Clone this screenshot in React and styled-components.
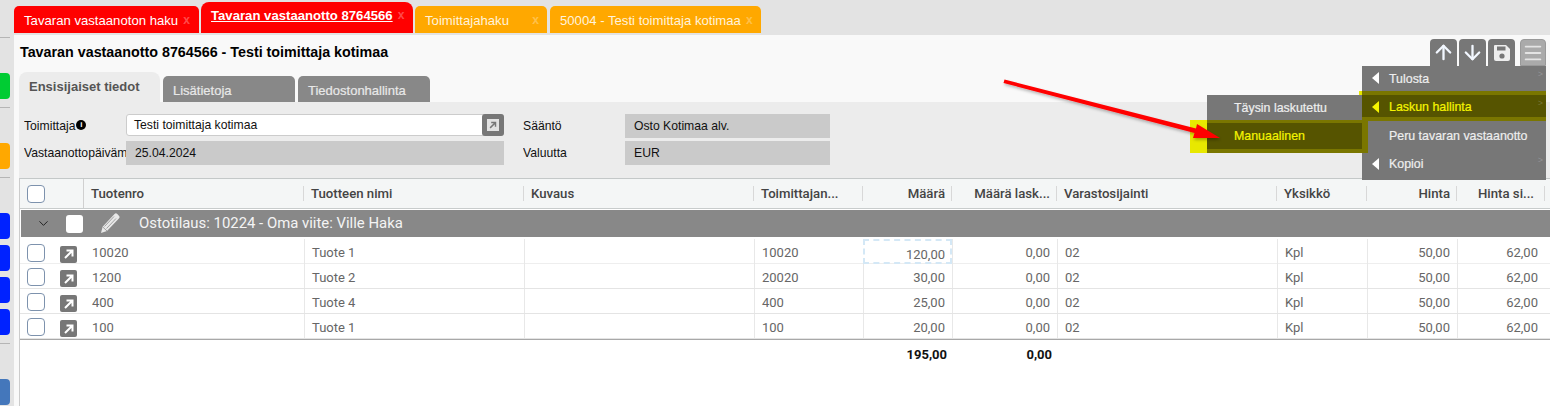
import React from 'react'
import styled, { createGlobalStyle } from 'styled-components'
import { ArrowUp, ArrowDown, Menu, ChevronDown } from 'lucide-react'

const columns = '64px 220px 220px 230px 109px 89px 105px 220px 90px 90px 88px 1fr'

const rows = [
  { no: '10020', name: 'Tuote 1', supplier: '10020', qty: '120,00', focused: true, thick: true },
  { no: '1200', name: 'Tuote 2', supplier: '20020', qty: '30,00' },
  { no: '400', name: 'Tuote 4', supplier: '400', qty: '25,00' },
  { no: '100', name: 'Tuote 1', supplier: '100', qty: '20,00' },
]

const GoIcon = ({ color = '#fff' }) => (
  <svg width="12" height="12" viewBox="0 0 12 12" fill="none" stroke={color} strokeWidth="2">
    <path d="M2 10 L9.5 2.5 M3.5 2.5 H9.5 V8.5" />
  </svg>
)

const App = () => {
  return (
    <Page>
      <GlobalStyle />
      <SideRail>
        <RailRule $top={37} />
        <RailButton $color="#00cc33" $top={35} />
        <RailRule $top={8} />
        <RailButton $color="#ffa800" $top={35} />
        <RailRule $top={8} />
        <RailButton $color="#0022ff" $top={35} />
        <RailButton $color="#0022ff" $top={6} />
        <RailButton $color="#0022ff" $top={6} />
        <RailButton $color="#0022ff" $top={6} />
        <RailRule $top={8} />
        <RailButton $color="#4477bb" $top={35} />
      </SideRail>
      <Content>
        <TabStrip>
          <PageTab $color="#ff0000" $width={185}>
            Tavaran vastaanoton haku<TabClose>x</TabClose>
          </PageTab>
          <PageTab $color="#ff0000" $width={212} $active>
            <u>Tavaran vastaanotto 8764566</u><TabClose>x</TabClose>
          </PageTab>
          <PageTab $color="#ffa800" $width={132}>
            Toimittajahaku<TabClose $push>x</TabClose>
          </PageTab>
          <PageTab $color="#ffa800" $width={211} $shift={1}>
            50004 - Testi toimittaja kotimaa<TabClose>x</TabClose>
          </PageTab>
        </TabStrip>
        <Sheet>
          <TitleRow>
            <Title>Tavaran vastaanotto 8764566 - Testi toimittaja kotimaa</Title>
            <Toolbar>
              <ToolButton><ArrowUp size={23} strokeWidth={2.4} /></ToolButton>
              <ToolButton><ArrowDown size={23} strokeWidth={2.4} /></ToolButton>
              <ToolButton>
                <svg width="20" height="20" viewBox="0 0 20 20">
                  <path d="M3 2 H14 L18 6 V16 a2 2 0 0 1 -2 2 H4 a2 2 0 0 1 -2 -2 V3 a1 1 0 0 1 1 -1 Z" fill="#eee" />
                  <rect x="5" y="3.5" width="8.5" height="4" fill="#777" />
                  <circle cx="10" cy="13" r="2.6" fill="#777" />
                </svg>
              </ToolButton>
              <ToolButton $light><Menu size={22} strokeWidth={2} /></ToolButton>
            </Toolbar>
          </TitleRow>
          <SectionTabs>
            <SectionTab $active>Ensisijaiset tiedot</SectionTab>
            <SectionTab>Lisätietoja</SectionTab>
            <SectionTab>Tiedostonhallinta</SectionTab>
          </SectionTabs>
          <FormPanel>
            <FormColumn>
              <FormRow>
                <FormLabel>Toimittaja<InfoDot>i</InfoDot></FormLabel>
                <LookupInput>
                  <span>Testi toimittaja kotimaa</span>
                  <LookupButton><LookupGlyph><GoIcon color="#777" /></LookupGlyph></LookupButton>
                </LookupInput>
              </FormRow>
              <FormRow>
                <FormLabel>Vastaanottopäivämäärä</FormLabel>
                <ReadOnlyField>25.04.2024</ReadOnlyField>
              </FormRow>
            </FormColumn>
            <FormColumn $second>
              <FormRow>
                <FormLabel>Sääntö</FormLabel>
                <ReadOnlyField $narrow>Osto Kotimaa alv.</ReadOnlyField>
              </FormRow>
              <FormRow>
                <FormLabel>Valuutta</FormLabel>
                <ReadOnlyField $narrow>EUR</ReadOnlyField>
              </FormRow>
            </FormColumn>
          </FormPanel>
          <Table>
            <HeaderRow>
              <HeaderCheckCell><CheckBox /></HeaderCheckCell>
              <HeaderCell>Tuotenro</HeaderCell>
              <HeaderCell>Tuotteen nimi</HeaderCell>
              <HeaderCell>Kuvaus</HeaderCell>
              <HeaderCell>Toimittajan...</HeaderCell>
              <HeaderCell $right>Määrä</HeaderCell>
              <HeaderCell $right>Määrä lask...</HeaderCell>
              <HeaderCell>Varastosijainti</HeaderCell>
              <HeaderCell>Yksikkö</HeaderCell>
              <HeaderCell $right>Hinta</HeaderCell>
              <HeaderCell $right $pad={10}>Hinta si...</HeaderCell>
              <span />
            </HeaderRow>
            <GroupRow>
              <ChevronDown size={15} color="#222" strokeWidth={1.6} />
              <GroupCheck />
              <GroupPencil width="20" height="21" viewBox="0 0 20 21">
                <path d="M14.5 1 a2 2 0 0 1 2.8 0 l1.6 1.7 a2 2 0 0 1 0 2.8 L7 18 L1 20 L2.6 13.8 Z" fill="#e8e8e8" />
                <path d="M4.5 13.5 L14 3.5 M6.5 15.5 L16 5.5" stroke="#999" strokeWidth="0.9" fill="none" />
                <path d="M2.6 13.8 L7 18" stroke="#999" strokeWidth="0.9" fill="none" />
              </GroupPencil>
              <GroupText>Ostotilaus: 10224 - Oma viite: Ville Haka</GroupText>
            </GroupRow>
            {rows.map(row => (
              <DataRow key={row.no} $thick={row.thick}>
                <CheckCell>
                  <CheckBox />
                  <RowLink><GoIcon /></RowLink>
                </CheckCell>
                <DataCell $plain>{row.no}</DataCell>
                <DataCell>{row.name}</DataCell>
                <DataCell />
                <DataCell>{row.supplier}</DataCell>
                <DataCell $right $focused={row.focused}>{row.qty}</DataCell>
                <DataCell $right>0,00</DataCell>
                <DataCell>02</DataCell>
                <DataCell>Kpl</DataCell>
                <DataCell $right>50,00</DataCell>
                <DataCell $right>62,00</DataCell>
                <span />
              </DataRow>
            ))}
            <SumRow>
              <span /><span /><span /><span /><span />
              <SumCell>195,00</SumCell>
              <SumCell>0,00</SumCell>
            </SumRow>
          </Table>
        </Sheet>
      </Content>

      <MainMenu>
        <MenuItem><Caret />Tulosta<MoreMark>&gt;</MoreMark></MenuItem>
        <MainActive><Caret $on />Laskun hallinta<MoreMark>&gt;</MoreMark></MainActive>
        <MenuItem>Peru tavaran vastaanotto</MenuItem>
        <MenuItem><Caret />Kopioi<MoreMark>&gt;</MoreMark></MenuItem>
      </MainMenu>
      <SubMenu>
        <MenuItem>Täysin laskutettu</MenuItem>
        <SubActive>Manuaalinen</SubActive>
      </SubMenu>
      <Arrow width="240" height="90" viewBox="0 0 240 90">
        <defs>
          <filter id="arrowShadow" x="-10%" y="-30%" width="120%" height="160%">
            <feDropShadow dx="1" dy="2" stdDeviation="1.5" floodColor="#000" floodOpacity="0.28" />
          </filter>
        </defs>
        <path
          d="M3.5 3.5 L195 52.5 L196 48 L219 62 L192 62 L193.5 57 L2.5 7 Z"
          fill="#ff0000"
          filter="url(#arrowShadow)"
        />
      </Arrow>
    </Page>
  )
}

const GlobalStyle = createGlobalStyle`
  html, body {
    margin: 0;
    padding: 0;
    background: #e3e3e3;
    overflow: hidden;
  }
`

const Page = styled.div`
  position: relative;
  display: flex;
  width: 1550px;
  height: 406px;
  overflow: hidden;
  font-family: 'Liberation Sans', Arial, sans-serif;
`

const SideRail = styled.div`
  flex: 0 0 14px;
  display: flex;
  flex-direction: column;
  align-items: flex-start;
`

const RailRule = styled.div`
  width: 10px;
  height: 1px;
  margin-top: ${p => p.$top}px;
  background: #b5b5b5;
  flex-shrink: 0;
`

const RailButton = styled.div`
  width: 10px;
  height: 26px;
  margin-top: ${p => p.$top}px;
  border-radius: 0 4px 4px 0;
  background: ${p => p.$color};
  flex-shrink: 0;
`

const Content = styled.div`
  flex: 1;
  display: flex;
  flex-direction: column;
  min-width: 0;
`

const TabStrip = styled.div`
  height: 33px;
  flex-shrink: 0;
  display: flex;
  align-items: flex-end;
  gap: 2px;
`

const PageTab = styled.div`
  display: flex;
  align-items: center;
  width: ${p => p.$width}px;
  height: ${p => (p.$active ? 31 : 27)}px;
  margin-left: ${p => p.$shift || 0}px;
  padding: ${p => (p.$active ? '0 0 5px 10px' : '1px 0 0 10px')};
  box-sizing: border-box;
  border-radius: ${p => (p.$active ? '8px 8px 0 0' : '5px 5px 0 0')};
  background: ${p => p.$color};
  color: ${p => (p.$color === '#ff0000' ? '#fff' : '#fff3dc')};
  font-size: 13.15px;
  font-weight: ${p => (p.$active ? 700 : 400)};
  white-space: nowrap;
`

const TabClose = styled.span`
  margin-left: ${p => (p.$push ? 'auto' : '5px')};
  margin-right: ${p => (p.$push ? '8px' : '0')};
  color: rgba(255, 255, 255, 0.3);
  font-weight: 700;
  font-size: 12px;
`

const Sheet = styled.div`
  flex: 1;
  display: flex;
  flex-direction: column;
  margin-top: 2px;
  padding-left: 5px;
  background: #f9f9f9;
  min-height: 0;
`

const TitleRow = styled.div`
  height: 37px;
  flex-shrink: 0;
  display: flex;
  justify-content: space-between;
  align-items: flex-start;
`

const Title = styled.h1`
  margin: 8px 0 0 1px;
  font-size: 14.3px;
  line-height: 18px;
  font-weight: 700;
  color: #000;
`

const Toolbar = styled.div`
  display: flex;
  gap: 2px;
  margin: 4px 4px 0 0;
`

const ToolButton = styled.div`
  width: ${p => (p.$light ? 26 : 27)}px;
  height: 27px;
  margin-left: ${p => (p.$light ? 3 : 0)}px;
  display: flex;
  align-items: center;
  justify-content: center;
  box-sizing: border-box;
  border-radius: 4px 4px 0 0;
  background: ${p => (p.$light ? '#aaa' : '#777')};
  border: ${p => (p.$light ? '1px solid #999' : 'none')};
  color: ${p => (p.$light ? '#e4e4e4' : '#f2f7ff')};
`

const SectionTabs = styled.div`
  height: 30px;
  flex-shrink: 0;
  display: flex;
  align-items: flex-end;
  gap: 3px;
`

const SectionTab = styled.div`
  width: ${p => (p.$active ? 141 : 132)}px;
  height: ${p => (p.$active ? 30 : 26)}px;
  box-sizing: border-box;
  padding: 7px 0 0 10px;
  border-radius: ${p => (p.$active ? '8px 8px 0 0' : '5px 5px 0 0')};
  background: ${p => (p.$active ? '#ececec' : '#888')};
  color: ${p => (p.$active ? '#555' : '#e8e8e8')};
  font-size: 13px;
  font-weight: ${p => (p.$active ? 700 : 400)};
  -webkit-text-stroke: ${p => (p.$active ? '0' : '0.2px')};
`

const FormPanel = styled.div`
  height: 76px;
  flex-shrink: 0;
  display: flex;
  background: #ececec;
  padding: 12px 0 0 5px;
  box-sizing: border-box;
`

const FormColumn = styled.div`
  display: flex;
  flex-direction: column;
  gap: 3px;
  width: ${p => (p.$second ? '307px' : '480px')};
  margin-left: ${p => (p.$second ? '19px' : '0')};
`

const FormRow = styled.div`
  display: flex;
  align-items: center;
  height: 24px;
`

const FormLabel = styled.div`
  flex: 0 0 102px;
  overflow: hidden;
  white-space: nowrap;
  display: flex;
  align-items: center;
  font-size: 12.2px;
  color: #111;
`

const InfoDot = styled.span`
  flex-shrink: 0;
  width: 10px;
  height: 10px;
  margin: -3px 0 0 1px;
  border-radius: 50%;
  background: #000;
  color: #fff;
  font-size: 8px;
  line-height: 10px;
  text-align: center;
  font-weight: 700;
`

const LookupInput = styled.div`
  flex: 1;
  align-self: flex-start;
  height: 22px;
  display: flex;
  align-items: center;
  justify-content: space-between;
  box-sizing: border-box;
  padding-left: 7px;
  background: #fff;
  border: 1px solid #ccc;
  border-radius: 3px;
  font-size: 12.2px;
  color: #111;
`

const LookupButton = styled.div`
  width: 22px;
  height: 22px;
  margin-right: -1px;
  display: flex;
  align-items: center;
  justify-content: center;
  border-radius: 3px;
  background: #777;
`

const LookupGlyph = styled.div`
  width: 12px;
  height: 12px;
  display: flex;
  align-items: center;
  justify-content: center;
  background: #e2e2e2;
  svg {
    transform: scale(0.72);
  }
`

const ReadOnlyField = styled.div`
  flex: ${p => (p.$narrow ? '0 0 205px' : '1')};
  height: 24px;
  box-sizing: border-box;
  padding-left: 9px;
  display: flex;
  align-items: center;
  background: #cacaca;
  font-size: 12.2px;
  color: #111;
`

const Table = styled.div`
  flex: 1;
  min-height: 0;
  background: #fff;
  border-left: 1px solid #ccc;
  border-top: 1px solid #c4c8c8;
  font-family: Roboto, sans-serif;
`

const HeaderRow = styled.div`
  display: grid;
  grid-template-columns: ${columns};
  align-items: center;
  height: 29px;
  background: #f4f6f6;
  border-bottom: 1px solid #c8cccc;
`

const HeaderCheckCell = styled.div`
  height: 100%;
  display: flex;
  align-items: center;
  padding-left: 7px;
  box-sizing: border-box;
  border-right: 1px solid #d0d0d0;
`

const HeaderCell = styled.div`
  height: 15px;
  line-height: 15px;
  padding: 0 ${p => p.$pad || 6}px 0 7px;
  box-sizing: border-box;
  border-right: 1px solid #d8d8d8;
  font-size: 13.2px;
  font-weight: 500;
  color: #444;
  white-space: nowrap;
  text-align: ${p => (p.$right ? 'right' : 'left')};
`

const CheckBox = styled.div`
  width: 18px;
  height: 18px;
  flex-shrink: 0;
  box-sizing: border-box;
  background: #fff;
  border: 1px solid #7d92ad;
  border-radius: 4px;
`

const GroupRow = styled.div`
  display: flex;
  align-items: center;
  height: 27px;
  margin: 1px 0 2px 1px;
  padding-left: 15px;
  background: #888;
`

const GroupCheck = styled.div`
  width: 17px;
  height: 18px;
  margin-left: 15px;
  background: #fff;
  border-radius: 3px;
`

const GroupPencil = styled.svg`
  margin-left: 17px;
  flex-shrink: 0;
`

const GroupText = styled.div`
  margin: 0 0 2px 19px;
  color: #f4f4f4;
  font-size: 14.9px;
`

const DataRow = styled.div`
  display: grid;
  grid-template-columns: ${columns};
  height: 24px;
  margin-bottom: 1px;
  box-shadow: 0 1px 0 ${p => (p.$thick ? '#eee' : '#e4e4e4')};
`

const CheckCell = styled.div`
  display: flex;
  align-items: center;
  box-sizing: border-box;
  padding: 2px 0 0 7px;
  gap: 15px;
`

const DataCell = styled.div`
  padding: 6px 7px 0;
  box-sizing: border-box;
  border-left: 1px solid ${p => (p.$plain ? 'transparent' : '#e8e8e8')};
  font-size: 13px;
  color: #666;
  text-align: ${p => (p.$right ? 'right' : 'left')};
  ${p => p.$focused && 'border: 2px dashed #d4e8f6; padding: 6px 5px 0 0;'}
`

const RowLink = styled.div`
  width: 17px;
  height: 17px;
  margin-top: 3px;
  display: flex;
  align-items: center;
  justify-content: center;
  border-radius: 2px;
  background: #777;
`

const SumRow = styled.div`
  display: grid;
  grid-template-columns: ${columns};
  border-top: 1px solid #a8a8a8;
  padding-top: 7px;
`

const SumCell = styled.div`
  padding-right: 5px;
  text-align: right;
  font-size: 13px;
  font-weight: 700;
  color: #111;
`

const MainMenu = styled.div`
  position: absolute;
  left: 1362px;
  top: 66px;
  width: 184px;
  background: #777;
`

const SubMenu = styled.div`
  position: absolute;
  left: 1207px;
  top: 95px;
  width: 155px;
  background: #777;
`

const MenuItem = styled.div`
  position: relative;
  z-index: 0;
  display: flex;
  align-items: center;
  height: 28.5px;
  box-sizing: border-box;
  padding: 0 0 3px 27px;
  font-size: 12.4px;
  -webkit-text-stroke: 0.2px;
  color: #eee;
`

const MainActive = styled(MenuItem)`
  color: #f5f500;
  &::before {
    content: '';
    position: absolute;
    z-index: -1;
    left: 0;
    right: 0;
    top: -3.5px;
    height: 30px;
    box-sizing: border-box;
    background: #565400;
    border-top: 4px solid #7a7600;
    border-bottom: 4px solid #7a7600;
  }
  &::after {
    content: '';
    position: absolute;
    left: -3px;
    top: -3.5px;
    width: 3px;
    height: 4px;
    background: #e8e800;
  }
`

const SubActive = styled(MenuItem)`
  color: #f5f500;
  &::before {
    content: '';
    position: absolute;
    z-index: -1;
    left: 0;
    right: -6px;
    top: -3.5px;
    height: 33px;
    box-sizing: border-box;
    background: #565400;
    border: solid #7a7600;
    border-width: 3px 6px 4px 0;
  }
  &::after {
    content: '';
    position: absolute;
    left: -17px;
    top: -3.5px;
    width: 17px;
    height: 33px;
    background: #e8e800;
  }
`

const Caret = styled.span`
  position: absolute;
  left: 10px;
  top: 50%;
  margin-top: -8px;
  border-style: solid;
  border-width: 6px 7px 6px 0;
  border-color: transparent ${p => (p.$on ? '#f5f500' : '#fff')} transparent transparent;
`

const MoreMark = styled.span`
  position: absolute;
  right: 3px;
  top: 3px;
  font-size: 9px;
  font-weight: 400;
  -webkit-text-stroke: 0;
  color: rgba(255, 255, 255, 0.2);
`

const Arrow = styled.svg`
  position: absolute;
  left: 1001px;
  top: 76px;
`

export default App
